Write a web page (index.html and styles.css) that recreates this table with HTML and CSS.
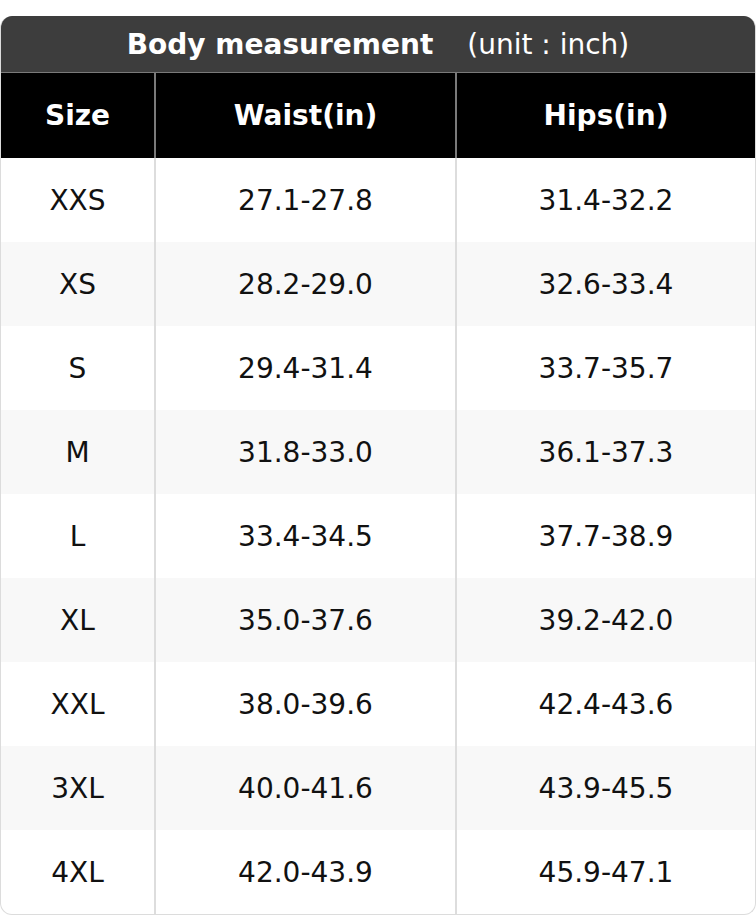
FILE: index.html
```html
<!DOCTYPE html>
<html>
<head>
<meta charset="utf-8">
<link rel="stylesheet" href="styles.css">
</head>
<body>
<div class="chart">
  <div class="title"><span class="title-main">Body measurement</span><span class="title-unit">(unit : inch)</span></div>
  <div class="row head">
    <div class="cell">Size</div>
    <div class="cell">Waist(in)</div>
    <div class="cell">Hips(in)</div>
  </div>
  <div class="row"><div class="cell">XXS</div><div class="cell">27.1-27.8</div><div class="cell">31.4-32.2</div></div>
  <div class="row alt"><div class="cell">XS</div><div class="cell">28.2-29.0</div><div class="cell">32.6-33.4</div></div>
  <div class="row"><div class="cell">S</div><div class="cell">29.4-31.4</div><div class="cell">33.7-35.7</div></div>
  <div class="row alt"><div class="cell">M</div><div class="cell">31.8-33.0</div><div class="cell">36.1-37.3</div></div>
  <div class="row"><div class="cell">L</div><div class="cell">33.4-34.5</div><div class="cell">37.7-38.9</div></div>
  <div class="row alt"><div class="cell">XL</div><div class="cell">35.0-37.6</div><div class="cell">39.2-42.0</div></div>
  <div class="row"><div class="cell">XXL</div><div class="cell">38.0-39.6</div><div class="cell">42.4-43.6</div></div>
  <div class="row alt"><div class="cell">3XL</div><div class="cell">40.0-41.6</div><div class="cell">43.9-45.5</div></div>
  <div class="row"><div class="cell">4XL</div><div class="cell">42.0-43.9</div><div class="cell">45.9-47.1</div></div>
</div>
</body>
</html>
```
FILE: styles.css
```css
html, body {
  margin: 0;
  padding: 0;
  background: #fff;
}
body {
  padding-top: 16px;
  font-family: "DejaVu Sans", "Liberation Sans", sans-serif;
  color: #111;
}
.chart {
  width: 756px;
  box-sizing: border-box;
  border: 1px solid #dcdcdc;
  border-top: none;
  border-radius: 12px;
  overflow: hidden;
}
.title {
  height: 56px;
  background: #3d3d3d;
  color: #fff;
  display: flex;
  align-items: center;
  justify-content: center;
  gap: 34px;
  font-size: 28px;
  border-bottom: 1px solid #7a7a7a;
}
.title-main {
  font-weight: bold;
}
.row {
  display: grid;
  grid-template-columns: 153px 301px 1fr;
  height: 84px;
  font-size: 28px;
}
.row.alt {
  background: #f8f8f8;
}
.row.head {
  height: 85px;
  background: #000;
  color: #fff;
  font-weight: bold;
}
.cell {
  display: flex;
  align-items: center;
  justify-content: center;
}
.cell + .cell {
  border-left: 2px solid #dddddd;
}
.head .cell + .cell {
  border-left: 2px solid #7a7a7a;
}
```
